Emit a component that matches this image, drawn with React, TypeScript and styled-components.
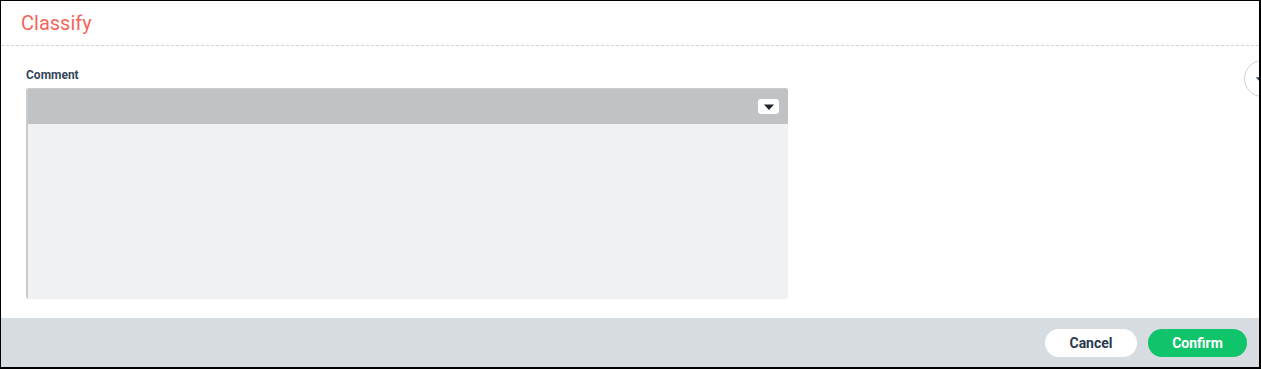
import React from 'react';
import styled, { createGlobalStyle } from 'styled-components';

const GlobalStyle = createGlobalStyle`
  html, body {
    margin: 0;
    padding: 0;
    background: #ffffff;
  }
  * {
    box-sizing: border-box;
  }
`;

const Frame = styled.div`
  position: relative;
  width: 1261px;
  height: 369px;
  border: 1px solid #000;
  border-right-width: 2px;
  border-bottom-width: 2px;
  display: flex;
  flex-direction: column;
  overflow: hidden;
  font-family: Roboto, "Liberation Sans", Arial, sans-serif;
  background: #fff;
`;

const Header = styled.div`
  height: 45px;
  padding: 10px 0 0 20px;
  border-bottom: 1px dashed #d4d4d4;
`;

const Title = styled.h1`
  margin: 0;
  font-size: 20px;
  font-weight: 400;
  color: #f2665c;
  line-height: 24px;
`;

const Body = styled.div`
  flex: 1;
  padding: 22px 0 0 25px;
`;

const Label = styled.label`
  display: block;
  font-size: 12px;
  font-weight: 700;
  color: #34465c;
  line-height: 14px;
  margin-bottom: 6px;
`;

const Editor = styled.div`
  width: 762px;
  height: 211px;
  display: flex;
  flex-direction: column;
  border-radius: 3px;
  overflow: hidden;
  background: #f0f1f2;
  border-left: 2px solid #c9cbcd;
`;

const Toolbar = styled.div`
  height: 36px;
  background: #bfc3c6;
  border-top: 1px solid #c9cbcd;
  display: flex;
  align-items: center;
  justify-content: flex-end;
  padding-right: 9px;
`;

const DropButton = styled.button`
  width: 21px;
  height: 15px;
  padding: 0;
  border: none;
  border-radius: 3px;
  background: #fff;
  display: flex;
  align-items: center;
  justify-content: center;
  cursor: pointer;
`;

const EditArea = styled.div`
  flex: 1;
  background: #f0f1f2;
`;

const SideToggle = styled.button`
  position: absolute;
  top: 59px;
  left: 1243px;
  width: 37px;
  height: 37px;
  border-radius: 50%;
  border: 1px solid #d2d2d2;
  background: #fff;
  display: flex;
  align-items: center;
  justify-content: flex-start;
  padding: 0 0 0 10px;
`;

const Footer = styled.div`
  height: 49px;
  background: #d6dcdf;
  display: flex;
  align-items: center;
  justify-content: flex-end;
  gap: 11px;
  padding-right: 12px;
`;

const Pill = styled.button<{ $primary?: boolean }>`
  height: 28px;
  width: ${p => (p.$primary ? '99px' : '92px')};
  border: none;
  border-radius: 14px;
  font-family: inherit;
  font-size: 14px;
  font-weight: 700;
  cursor: pointer;
  background: ${p => (p.$primary ? '#10c46b' : '#ffffff')};
  color: ${p => (p.$primary ? '#ffffff' : '#2b3a4e')};
`;

const Caret = ({ color, size = 8 }: { color: string; size?: number }) => (
  <svg width={size * 1.5} height={size} viewBox="0 0 12 8">
    <path d="M1 1.5 L11 1.5 L6 7 Z" fill={color} />
  </svg>
);

export default function App() {
  return (
    <>
      <GlobalStyle />
      <Frame>
        <Header>
          <Title>Classify</Title>
        </Header>
        <Body>
          <Label>Comment</Label>
          <Editor>
            <Toolbar>
              <DropButton aria-label="Options">
                <Caret color="#1f2733" size={8} />
              </DropButton>
            </Toolbar>
            <EditArea />
          </Editor>
        </Body>
        <Footer>
          <Pill>Cancel</Pill>
          <Pill $primary>Confirm</Pill>
        </Footer>
        <SideToggle aria-label="Toggle panel">
          <Caret color="#2a4a6e" size={6} />
        </SideToggle>
      </Frame>
    </>
  );
}
